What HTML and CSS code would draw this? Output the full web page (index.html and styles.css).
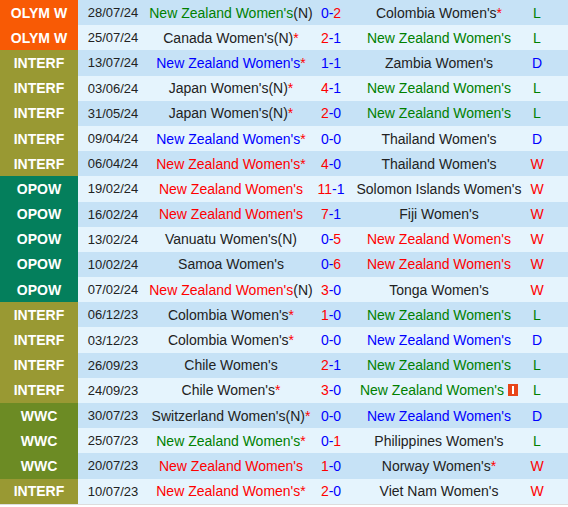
FILE: index.html
```html
<!DOCTYPE html>
<html>
<head>
<meta charset="utf-8">
<link rel="stylesheet" href="styles.css">
</head>
<body>
<div class="table">
  <div class="row odd"><div class="lg olym">OLYM W</div><div class="date">28/07/24</div><div class="home"><span class="g">New Zealand Women's</span>(N)</div><div class="score">0-<span class="r">2</span></div><div class="away">Colombia Women's<span class="st">*</span></div><div class="res g">L</div></div>
  <div class="row even"><div class="lg olym">OLYM W</div><div class="date">25/07/24</div><div class="home">Canada Women's(N)<span class="st">*</span></div><div class="score"><span class="r">2</span>-1</div><div class="away g">New Zealand Women's</div><div class="res g">L</div></div>
  <div class="row odd"><div class="lg interf">INTERF</div><div class="date">13/07/24</div><div class="home"><span class="b">New Zealand Women's</span><span class="st">*</span></div><div class="score">1-1</div><div class="away">Zambia Women's</div><div class="res b">D</div></div>
  <div class="row even"><div class="lg interf">INTERF</div><div class="date">03/06/24</div><div class="home">Japan Women's(N)<span class="st">*</span></div><div class="score"><span class="r">4</span>-1</div><div class="away g">New Zealand Women's</div><div class="res g">L</div></div>
  <div class="row odd"><div class="lg interf">INTERF</div><div class="date">31/05/24</div><div class="home">Japan Women's(N)<span class="st">*</span></div><div class="score"><span class="r">2</span>-0</div><div class="away g">New Zealand Women's</div><div class="res g">L</div></div>
  <div class="row even"><div class="lg interf">INTERF</div><div class="date">09/04/24</div><div class="home"><span class="b">New Zealand Women's</span><span class="st">*</span></div><div class="score">0-0</div><div class="away">Thailand Women's</div><div class="res b">D</div></div>
  <div class="row odd"><div class="lg interf">INTERF</div><div class="date">06/04/24</div><div class="home"><span class="r">New Zealand Women's</span><span class="st">*</span></div><div class="score"><span class="r">4</span>-0</div><div class="away">Thailand Women's</div><div class="res r">W</div></div>
  <div class="row even"><div class="lg opow">OPOW</div><div class="date">19/02/24</div><div class="home r">New Zealand Women's</div><div class="score"><span class="r">11</span>-1</div><div class="away">Solomon Islands Women's</div><div class="res r">W</div></div>
  <div class="row odd"><div class="lg opow">OPOW</div><div class="date">16/02/24</div><div class="home r">New Zealand Women's</div><div class="score"><span class="r">7</span>-1</div><div class="away">Fiji Women's</div><div class="res r">W</div></div>
  <div class="row even"><div class="lg opow">OPOW</div><div class="date">13/02/24</div><div class="home">Vanuatu Women's(N)</div><div class="score">0-<span class="r">5</span></div><div class="away r">New Zealand Women's</div><div class="res r">W</div></div>
  <div class="row odd"><div class="lg opow">OPOW</div><div class="date">10/02/24</div><div class="home">Samoa Women's</div><div class="score">0-<span class="r">6</span></div><div class="away r">New Zealand Women's</div><div class="res r">W</div></div>
  <div class="row even"><div class="lg opow">OPOW</div><div class="date">07/02/24</div><div class="home"><span class="r">New Zealand Women's</span>(N)</div><div class="score"><span class="r">3</span>-0</div><div class="away">Tonga Women's</div><div class="res r">W</div></div>
  <div class="row odd"><div class="lg interf">INTERF</div><div class="date">06/12/23</div><div class="home">Colombia Women's<span class="st">*</span></div><div class="score"><span class="r">1</span>-0</div><div class="away g">New Zealand Women's</div><div class="res g">L</div></div>
  <div class="row even"><div class="lg interf">INTERF</div><div class="date">03/12/23</div><div class="home">Colombia Women's<span class="st">*</span></div><div class="score">0-0</div><div class="away b">New Zealand Women's</div><div class="res b">D</div></div>
  <div class="row odd"><div class="lg interf">INTERF</div><div class="date">26/09/23</div><div class="home">Chile Women's</div><div class="score"><span class="r">2</span>-1</div><div class="away g">New Zealand Women's</div><div class="res g">L</div></div>
  <div class="row even"><div class="lg interf">INTERF</div><div class="date">24/09/23</div><div class="home">Chile Women's<span class="st">*</span></div><div class="score"><span class="r">3</span>-0</div><div class="away g">New Zealand Women's <svg class="card" width="10" height="12" viewBox="0 0 10 12"><rect x="0" y="0" width="10" height="12" fill="#e8461a"/><rect x="4" y="2" width="2" height="8" fill="#fff"/></svg></div><div class="res g">L</div></div>
  <div class="row odd"><div class="lg wwc">WWC</div><div class="date">30/07/23</div><div class="home">Switzerland Women's(N)<span class="st">*</span></div><div class="score">0-0</div><div class="away b">New Zealand Women's</div><div class="res b">D</div></div>
  <div class="row even"><div class="lg wwc">WWC</div><div class="date">25/07/23</div><div class="home"><span class="g">New Zealand Women's</span><span class="st">*</span></div><div class="score">0-<span class="r">1</span></div><div class="away">Philippines Women's</div><div class="res g">L</div></div>
  <div class="row odd"><div class="lg wwc">WWC</div><div class="date">20/07/23</div><div class="home r">New Zealand Women's</div><div class="score"><span class="r">1</span>-0</div><div class="away">Norway Women's<span class="st">*</span></div><div class="res r">W</div></div>
  <div class="row even"><div class="lg interf">INTERF</div><div class="date">10/07/23</div><div class="home"><span class="r">New Zealand Women's</span><span class="st">*</span></div><div class="score"><span class="r">2</span>-0</div><div class="away">Viet Nam Women's</div><div class="res r">W</div></div>
</div>
</body>
</html>
```
FILE: styles.css
```css
html, body {
  margin: 0;
  padding: 0;
  background: #ffffff;
}
body {
  font-family: "Liberation Sans", Arial, sans-serif;
  font-size: 14px;
  color: #222222;
}
.table {
  width: 568px;
  border-bottom: 1px solid #dddddd;
}
.row {
  display: grid;
  grid-template-columns: 78px 70px 166px 34px 182px 14px 1fr;
  height: 25.2px;
  align-items: center;
  white-space: nowrap;
}
.row > div {
  height: 100%;
  display: flex;
  align-items: center;
  justify-content: center;
}
.odd { background: #c6e2f6; }
.even { background: #e5f4fd; }
.lg {
  color: #ffffff;
  font-weight: bold;
  font-size: 14px;
}
.olym { background: #f85a05; }
.interf { background: #999933; }
.opow { background: #047f5c; }
.wwc { background: #6c8b24; }
.date { font-size: 13px; }
.score { color: #0000ff; }
.g { color: #008000; }
.b { color: #0000ff; }
.r { color: #ff0000; }
.st { color: #ff0000; }
.card { margin-left: 4px; }
```
